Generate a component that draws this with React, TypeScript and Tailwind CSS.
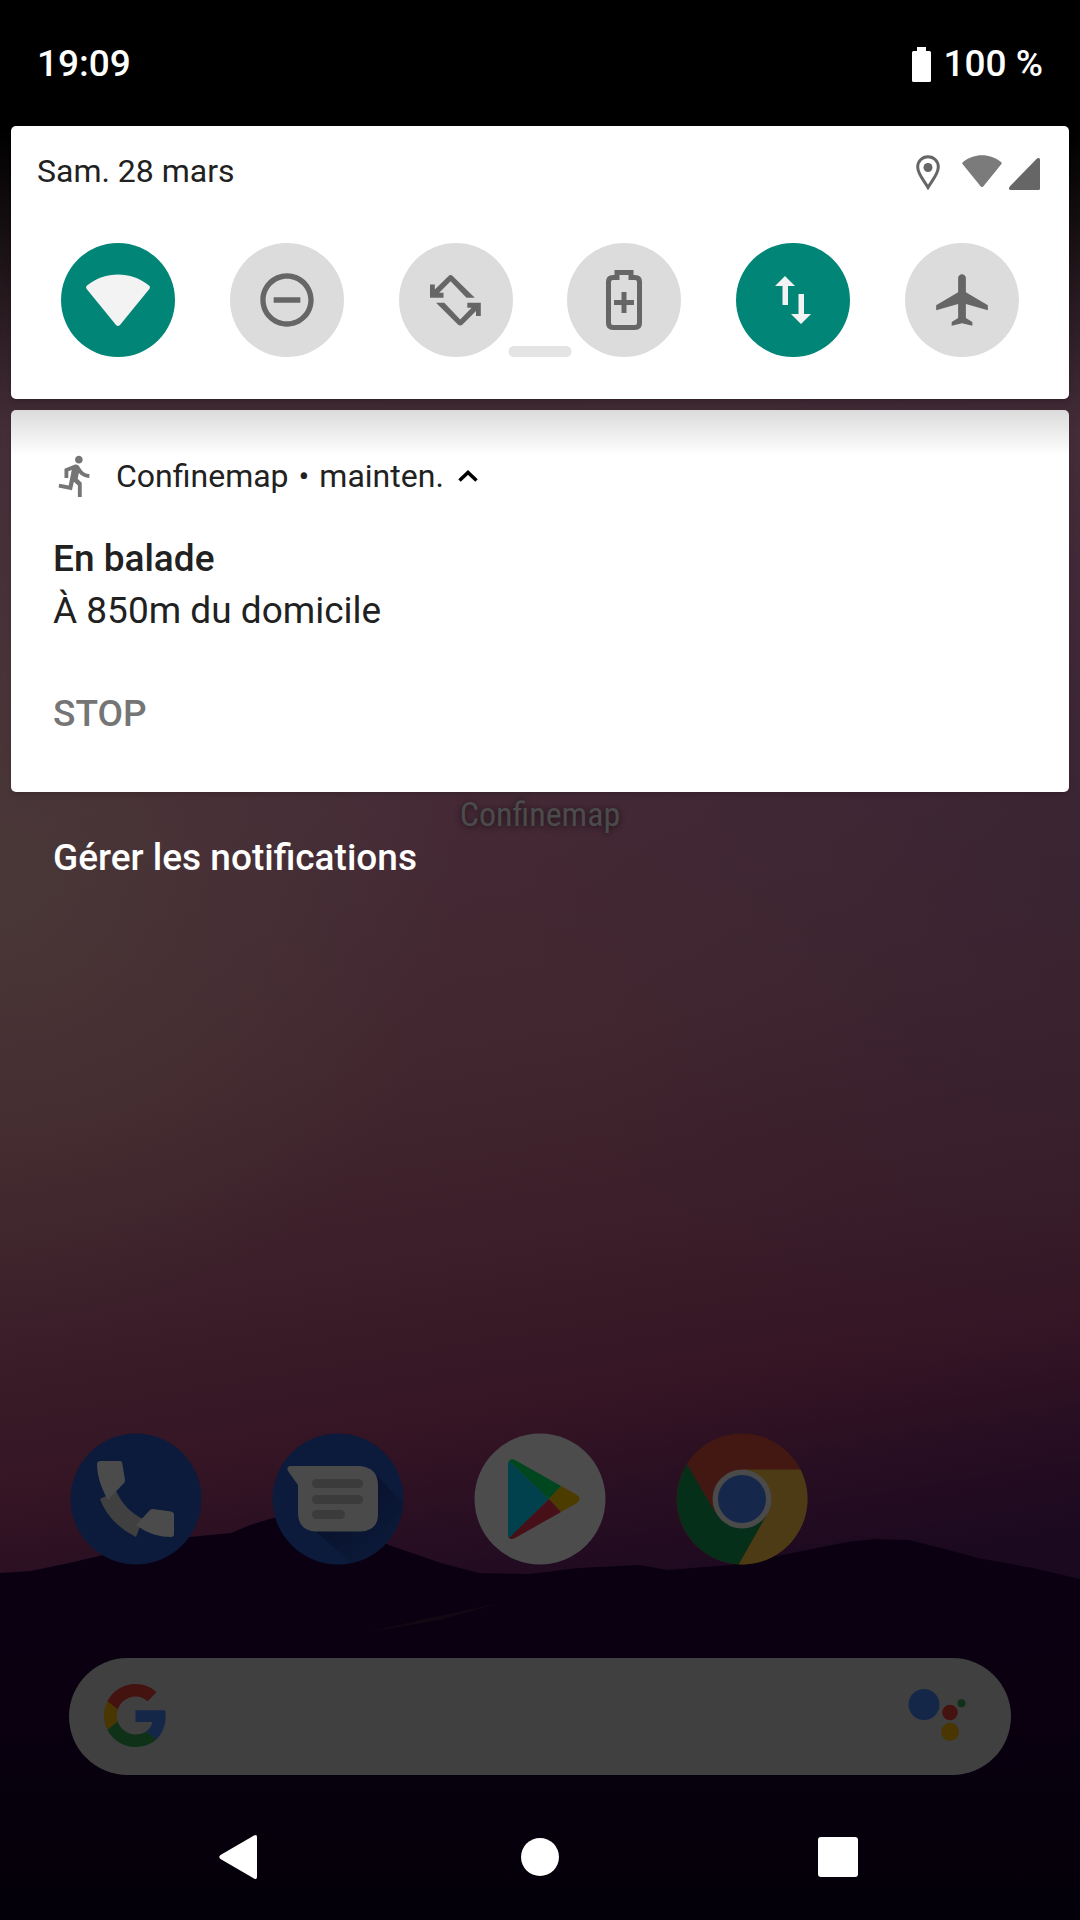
import React from "react";
import {
  MdOutlineDoNotDisturbOn,
  MdDirectionsRun,
  MdAirplanemodeActive,
} from "react-icons/md";

function Wallpaper() {
  return (
    <svg
      aria-hidden="true"
      className="absolute inset-0 h-full w-full"
      viewBox="0 0 1080 1920"
      preserveAspectRatio="none"
    >
      <defs>
        <linearGradient id="sky" gradientUnits="userSpaceOnUse" x1="420" y1="100" x2="670" y2="1600">
          <stop offset="0" stopColor="#402c34" />
          <stop offset="0.3" stopColor="#462d39" />
          <stop offset="0.45" stopColor="#452a36" />
          <stop offset="0.62" stopColor="#42262f" />
          <stop offset="0.75" stopColor="#3b1e29" />
          <stop offset="0.86" stopColor="#351524" />
          <stop offset="0.93" stopColor="#280e22" />
          <stop offset="1" stopColor="#1b0920" />
        </linearGradient>
        <radialGradient id="warm" gradientUnits="userSpaceOnUse" cx="0" cy="880" r="460">
          <stop offset="0" stopColor="#4c4038" stopOpacity="0.6" />
          <stop offset="1" stopColor="#4c4038" stopOpacity="0" />
        </radialGradient>
        <radialGradient id="cool" gradientUnits="userSpaceOnUse" cx="1080" cy="860" r="560">
          <stop offset="0" stopColor="#2c2032" stopOpacity="0.4" />
          <stop offset="1" stopColor="#2c2032" stopOpacity="0" />
        </radialGradient>
        <linearGradient id="top" x1="0" y1="0" x2="0" y2="1">
          <stop offset="0" stopColor="#000" />
          <stop offset="0.3" stopColor="#000" />
          <stop offset="1" stopColor="#000" stopOpacity="0" />
        </linearGradient>
        <linearGradient id="hill" x1="0" y1="0" x2="0" y2="1">
          <stop offset="0" stopColor="#0b0012" />
          <stop offset="0.5" stopColor="#0a0010" />
          <stop offset="0.75" stopColor="#05000b" />
          <stop offset="1" stopColor="#04000a" />
        </linearGradient>
      </defs>
      <rect width="1080" height="1920" fill="url(#sky)" />
      <rect width="1080" height="1920" fill="url(#warm)" />
      <rect width="1080" height="1920" fill="url(#cool)" />
      <rect width="1080" height="430" fill="url(#top)" />
      <path
        fill="url(#hill)"
        d="M0 1573L31 1571L69 1563L103 1555L189 1537L231 1533L250 1525L273 1518L330 1516L389 1545L441 1563L479 1573L530 1574L578 1568L640 1565L668 1570L730 1565L792 1553L847 1542L875 1539L909 1540L945 1549L978 1558L1033 1568L1080 1579V1920H0Z"
      />
      <path d="M370 1632L420 1620L500 1603L440 1620Z" fill="#140714" />
    </svg>
  );
}

function WifiGlyph({ className }: { className: string }) {
  return (
    <svg viewBox="0 0 64 52" className={className} fill="currentColor" aria-hidden="true">
      <path d="M1 11.500C19-3.300 45-3.300 63 11.500Q64.700 13 63.300 15L34 51Q32 53 30 51L.700 15Q-.700 13 1 11.500Z" />
    </svg>
  );
}

function BatteryFull() {
  return (
    <svg viewBox="0 0 19 35" className="h-[35px] w-[19px]" fill="currentColor" aria-hidden="true">
      <path d="M5 0H14V4H17.500Q19 4 19 5.500V33.500Q19 35 17.500 35H1.500Q0 35 0 33.500V5.500Q0 4 1.500 4H5Z" />
    </svg>
  );
}

function LocationGlyph() {
  return (
    <svg viewBox="0 0 24 35" className="h-[35px] w-[24px]" aria-hidden="true">
      <path
        d="M12 1.700C6 1.700 1.700 6.300 1.700 12C1.700 19 8 25.500 12 32.500C16 25.500 22.300 19 22.300 12C22.300 6.300 18 1.700 12 1.700Z"
        fill="none"
        stroke="#666"
        strokeWidth="3"
      />
      <circle cx="12" cy="12.500" r="4.500" fill="#666" />
    </svg>
  );
}

function SignalGlyph() {
  return (
    <svg viewBox="0 0 31 32" className="h-[32px] w-[31px]" aria-hidden="true">
      <path d="M27.500 1Q31-1.500 31 2V30.500Q31 32 29.500 32H2Q-1.500 32 .800 28.500Z" fill="#666" />
    </svg>
  );
}

const rotateArrow =
  "M0 9.500H4.800V14.500L18.300 1.200Q20.600-1 22.900 1.200L44.800 22.800H36.500L20.600 6.200L9.200 17.800H13.500V22.800H0Z";

function RotateGlyph() {
  return (
    <svg viewBox="0 0 51 51" className="size-[51px]" fill="currentColor" aria-hidden="true">
      <path d={rotateArrow} />
      <path d={rotateArrow} transform="rotate(180 25.400 25.300)" />
    </svg>
  );
}

function BatterySaverGlyph() {
  return (
    <svg viewBox="0 0 36 60" className="h-[60px] w-[36px]" fill="none" stroke="currentColor" aria-hidden="true">
      <path
        d="M11 7.500V2.500H25V7.500H29Q33.500 7.500 33.500 12V53Q33.500 57.500 29 57.500H7Q2.500 57.500 2.500 53V12Q2.500 7.500 7 7.500Z"
        strokeWidth="5"
      />
      <path d="M18 22V43M8 32.500H28" strokeWidth="5" />
    </svg>
  );
}

function DataGlyph() {
  return (
    <svg viewBox="0 0 36 48" className="h-[48px] w-[36px]" fill="currentColor" aria-hidden="true">
      <path d="M10 0L20 10H13V29H7.500V10H0Z" />
      <path d="M26 48L16 38H23.500V18H29V38H36Z" />
    </svg>
  );
}

const tiles = [
  { label: "Wi-Fi", on: true, icon: <WifiGlyph className="h-[52px] w-[64px]" /> },
  { label: "Ne pas déranger", on: false, icon: <MdOutlineDoNotDisturbOn className="size-[64px]" /> },
  { label: "Rotation automatique", on: false, icon: <RotateGlyph /> },
  { label: "Économiseur de batterie", on: false, icon: <BatterySaverGlyph /> },
  { label: "Données mobiles", on: true, icon: <DataGlyph /> },
  { label: "Mode Avion", on: false, icon: <MdAirplanemodeActive className="size-[62px]" /> },
];

function PhoneIcon() {
  return (
    <svg viewBox="0 0 132 132" className="size-[132px]" aria-hidden="true">
      <circle cx="66" cy="66" r="65.500" fill="#0c1b3b" />
      <path d="M46 58C53 72 61 80 73 86L66 104C48 95 36 82 30 66Z" fill="#404040" />
      <path d="M31 28H50Q52 28 52.200 30L55 47Q55 49 54 50L38 67C31 55 27 42 27 31Q27 28 31 28Z" fill="#4b4b4b" />
      <path d="M83 76L101 78.500Q104 79 104 82V101Q104 104 101 104C90 104 78 101 66 92L80 77Q81.500 75.800 83 76Z" fill="#4b4b4b" />
    </svg>
  );
}

function MessagesIcon() {
  return (
    <svg viewBox="0 0 132 132" className="size-[132px]" aria-hidden="true">
      <defs>
        <linearGradient id="msgShadow" x1="0.300" y1="0.300" x2="0.900" y2="0.900">
          <stop offset="0" stopColor="#08112a" />
          <stop offset="1" stopColor="#0c1b3b" />
        </linearGradient>
      </defs>
      <circle cx="66" cy="66" r="65.500" fill="#0c1b3b" />
      <path d="M104 42L131 69A65.500 65.500 0 0 1 80 130L36 92Z" fill="url(#msgShadow)" />
      <path d="M18 33H88Q106 35 106 52V81Q106 98 88 98.500H44Q27 98 26 81V52L16 38Q14 34 18 33Z" fill="#4a4a4a" />
      <g fill="#3b3b3b">
        <rect x="40" y="46" width="51" height="9" rx="4.500" />
        <rect x="40" y="62" width="51" height="9" rx="4.500" />
        <rect x="40" y="77" width="33" height="9" rx="4.500" />
      </g>
    </svg>
  );
}

function PlayIcon() {
  return (
    <svg viewBox="0 0 132 132" className="size-[132px]" aria-hidden="true">
      <circle cx="66" cy="66" r="65.500" fill="#4c4c4c" />
      <path d="M35 28L75 66L35 105.500Q34 104 34 102V31Q34 29 35 28Z" fill="#00414d" />
      <path d="M35 28Q37 25 41 27L87 53L75 66Z" fill="#00461f" />
      <path d="M87 53L103 62Q108 66 103 70L87 79L75 66Z" fill="#4d3c00" />
      <path d="M87 79L41 105Q37 107 35 105L75 66Z" fill="#470f17" />
    </svg>
  );
}

function ChromeIcon() {
  return (
    <svg viewBox="0 0 132 132" className="size-[132px]" aria-hidden="true">
      <circle cx="66" cy="66" r="65.500" fill="#431812" />
      <path d="M66 36.500H124.500A65.500 65.500 0 0 1 62.500 131.400L91 81Z" fill="#4c3b15" />
      <path d="M11 31A65.500 65.500 0 0 0 62.500 131.400L91 81L40 81Z" fill="#062f1a" />
      <circle cx="66" cy="66" r="29.500" fill="#4a4a4a" />
      <circle cx="66" cy="66" r="24" fill="#15284b" />
    </svg>
  );
}

const dock = [
  { label: "Téléphone", icon: <PhoneIcon /> },
  { label: "Messages", icon: <MessagesIcon /> },
  { label: "Play Store", icon: <PlayIcon /> },
  { label: "Chrome", icon: <ChromeIcon /> },
];

function GoogleG() {
  return (
    <svg viewBox="0 0 48 48" className="size-[63px]" aria-hidden="true">
      <path fill="#44130f" d="M24 9.500c3.540 0 6.710 1.220 9.210 3.600l6.850-6.850C35.900 2.380 30.470 0 24 0 14.620 0 6.510 5.380 2.560 13.220l7.980 6.190C12.430 13.720 17.740 9.500 24 9.500z" />
      <path fill="#152748" d="M46.980 24.550c0-1.570-.15-3.090-.38-4.550H24v9.020h12.940c-.58 2.960-2.260 5.480-4.780 7.180l7.730 6c4.510-4.180 7.090-10.360 7.090-17.650z" />
      <path fill="#493601" d="M10.530 28.590c-.48-1.450-.76-2.990-.76-4.590s.27-3.140.76-4.590l-7.980-6.190C.92 16.460 0 20.120 0 24c0 3.880.92 7.540 2.560 10.780l7.970-6.190z" />
      <path fill="#0f3118" d="M24 48c6.480 0 11.930-2.130 15.890-5.810l-7.730-6c-2.150 1.450-4.920 2.300-8.160 2.300-6.260 0-11.570-4.220-13.470-9.910l-7.980 6.190C6.510 42.620 14.620 48 24 48z" />
    </svg>
  );
}

function AssistantIcon() {
  return (
    <svg viewBox="0 0 58 54" className="h-[54px] w-[58px]" aria-hidden="true">
      <circle cx="16" cy="15.500" r="15.500" fill="#152748" />
      <circle cx="42" cy="23.500" r="7.800" fill="#45130f" />
      <circle cx="42" cy="42.800" r="9" fill="#493601" />
      <circle cx="53.500" cy="14.200" r="4" fill="#0f3118" />
    </svg>
  );
}

export default function App() {
  return (
    <div className="relative flex min-h-screen w-full flex-col overflow-hidden bg-[#04000a] font-[Roboto,sans-serif] text-[#212121]">
      <Wallpaper />
      <div className="relative flex grow flex-col">
        <header className="flex h-[126px] items-center justify-between bg-black px-[37px] pt-[2px] text-[37px] leading-[44px] font-medium text-white">
          <time>19:09</time>
          <div className="flex items-center gap-[12px]">
            <BatteryFull />
            <span>100 %</span>
          </div>
        </header>

        <main className="flex flex-col gap-[11px] px-[11px]">
          <section className="relative h-[273px] rounded-[5px] bg-white shadow-md" aria-label="Réglages rapides">
            <div className="flex h-[90px] items-end justify-between pr-[29px] pb-[26px] pl-[26px]">
              <span className="text-[32px] leading-[38px]">Sam. 28 mars</span>
              <div className="flex items-end text-[#7b7b7b]">
                <LocationGlyph />
                <WifiGlyph className="mb-[3px] ml-[22px] h-[32px] w-[40px]" />
                <span className="ml-[7px]">
                  <SignalGlyph />
                </span>
              </div>
            </div>
            <div className="flex justify-between px-[50px] pt-[27px]">
              {tiles.map((t) => (
                <button
                  key={t.label}
                  type="button"
                  aria-label={t.label}
                  aria-pressed={t.on}
                  className={
                    t.on
                      ? "flex size-[114px] items-center justify-center rounded-full bg-[#008577] text-[#f3f3f3]"
                      : "flex size-[114px] items-center justify-center rounded-full bg-[#dcdcdc] text-[#666666]"
                  }
                >
                  {t.icon}
                </button>
              ))}
            </div>
            <div className="absolute bottom-[42px] left-1/2 h-[11px] w-[63px] -translate-x-1/2 rounded-full bg-[#e4e4e4]" />
          </section>

          <article className="rounded-[5px] bg-white bg-linear-to-b from-[#dbdbdb] to-white to-[46px] px-[42px] pt-[43px] pb-[54px] shadow-md">
            <div className="flex h-[46px] items-center text-[32px] leading-[38px]">
              <MdDirectionsRun className="size-[46px] text-[#757575]" />
              <span className="ml-[17px]">Confinemap</span>
              <span className="mx-[10px]">•</span>
              <span>mainten.</span>
              <button type="button" aria-label="Réduire" className="ml-[14px]">
                <svg viewBox="0 0 20 12" className="h-[12px] w-[20px]" fill="none" stroke="#000" strokeWidth="3.500" aria-hidden="true">
                  <path d="M1.500 10.500L10 2.500L18.500 10.500" />
                </svg>
              </button>
            </div>
            <h1 className="mt-[36px] text-[37px] leading-[48px] font-medium">En balade</h1>
            <p className="mt-[4px] text-[37px] leading-[48px]">À 850m du domicile</p>
            <button type="button" className="mt-[55px] block text-[37px] leading-[48px] font-medium text-[#757575]">
              STOP
            </button>
          </article>
        </main>

        <div className="mt-[2px] flex h-[40px] items-center justify-center">
          <span className="font-['Roboto_Condensed',Roboto,sans-serif] text-[34px] leading-[40px] text-[#4b4b4b] [text-shadow:0_1px_6px_#1c0f18]">
            Confinemap
          </span>
        </div>
        <button type="button" className="mt-[2px] ml-[53px] self-start text-[37px] leading-[44px] font-medium text-white">
          Gérer les notifications
        </button>

        <nav aria-label="Applications" className="mt-auto grid grid-cols-5 px-[35px]">
          {dock.map((d) => (
            <a key={d.label} href="#" aria-label={d.label} className="flex justify-center">
              {d.icon}
            </a>
          ))}
        </nav>
        <div className="mx-[69px] mt-[93px] flex h-[117px] items-center justify-between rounded-full bg-[#404041] pr-[45px] pb-[2px] pl-[35px]">
          <button type="button" aria-label="Google">
            <GoogleG />
          </button>
          <input type="search" aria-label="Rechercher" className="h-full min-w-0 grow bg-transparent px-4 text-[32px] outline-none" />
          <button type="button" aria-label="Assistant">
            <AssistantIcon />
          </button>
        </div>
        <nav aria-label="Navigation" className="mt-[18px] grid h-[127px] grid-cols-[1fr_300px_1fr] items-center">
          <button type="button" aria-label="Retour" className="mr-[133px] justify-self-end">
            <svg viewBox="0 0 38 44" className="h-[44px] w-[38px]" fill="#fff" aria-hidden="true">
              <path d="M35 .500Q38-1 38 2V42Q38 45 35 43.500L1.500 24Q-1 22 1.500 20Z" />
            </svg>
          </button>
          <button type="button" aria-label="Accueil" className="size-[38px] justify-self-center rounded-full bg-white" />
          <button type="button" aria-label="Applications récentes" className="ml-[128px] size-[40px] rounded-[3px] bg-white" />
        </nav>
      </div>
    </div>
  );
}
